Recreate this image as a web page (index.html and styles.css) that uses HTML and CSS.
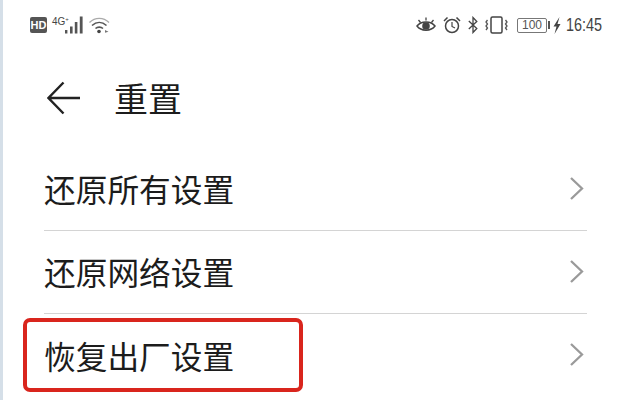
FILE: index.html
```html
<!DOCTYPE html>
<html lang="zh">
<head>
<meta charset="utf-8">
<title>重置</title>
<link rel="stylesheet" href="styles.css">
</head>
<body>
<div class="screen">
  <div class="status">
    <div class="status-left">
      <span class="hd">HD</span>
      <span class="net">4G<sup>+</sup></span>
      <svg class="signal" width="20" height="18" viewBox="0 0 20 18"><path d="M1 14h2.400v3.500H1zM6 10.500h2.600v7H6zM10.800 6h2.600v11.500h-2.600zM15.800 .5h2.800v17h-2.800z" fill="#555"/></svg>
      <svg class="wifi" width="21" height="18" viewBox="0 0 21 18" fill="none"><path d="M.5 6.500C6 1 14.500 1 20 6.500" stroke="#aaa" stroke-width="1.300"/><path d="M3 9.500C7.500 5.500 13 5.500 17.500 9.500" stroke="#555" stroke-width="1.600"/><path d="M6.500 12.500C8.500 10.700 12 10.700 14 12.500" stroke="#555" stroke-width="1.600"/><circle cx="10" cy="15.500" r="1.800" fill="#444"/><path d="M16 14l3.500 1.800-3.500 1z" fill="#777"/></svg>
    </div>
    <div class="status-right">
      <svg width="20" height="18" viewBox="0 0 20 18" fill="none"><path d="M1 10C5 4.500 15 4.500 19 10 15 15.500 5 15.500 1 10z" stroke="#444" stroke-width="1.500"/><circle cx="10" cy="10" r="3.800" fill="#444"/><path d="M2.500 4l2 2.500M17.500 4l-2 2.500M10 1.500v3" stroke="#444" stroke-width="1.300"/></svg>
      <svg width="18" height="18" viewBox="0 0 18 18" fill="none"><circle cx="9" cy="10" r="6.500" stroke="#444" stroke-width="1.500"/><path d="M9 6v4.500l3 1.500" stroke="#444" stroke-width="1.200"/><path d="M1 5L4.500 1.500M17 5L13.500 1.500" stroke="#444" stroke-width="1.500"/></svg>
      <svg width="10" height="18" viewBox="0 0 10 18" fill="none"><path d="M.8 5l8 7.500-3.800 4V1.500L8.800 5.500l-8 7.500" stroke="#444" stroke-width="1.300"/></svg>
      <svg width="23" height="18" viewBox="0 0 23 18" fill="none"><rect x="6" y="1" width="11" height="16" rx="1.500" stroke="#444" stroke-width="1.500"/><path d="M2.500 4L1 6l1.500 2L1 10l1.500 2L1 14M20.500 4L22 6l-1.500 2L22 10l-1.500 2L22 14" stroke="#555" stroke-width="1.300"/></svg>
      <span class="battery"><span class="battery-body">100</span><span class="battery-cap"></span></span>
      <svg class="bolt" width="8" height="17" viewBox="0 0 8 17"><path d="M6.500 0L.5 9.500h3L1.500 17l6-10h-3z" fill="#444"/></svg>
      <span class="time">16:45</span>
    </div>
  </div>
  <header class="title-bar">
    <svg class="back" width="34" height="34" viewBox="0 0 34 34" fill="none"><path d="M33 17H2.500M16.500 1.500L1.500 17l15 15.500" stroke="#222" stroke-width="2.400"/></svg>
    <h1 class="title">重置</h1>
  </header>
  <ul class="list">
    <li class="row"><span>还原所有设置</span><svg class="chev" width="15" height="25" viewBox="0 0 15 25" fill="none"><path d="M2 2l11 10.500L2 23" stroke="#9a9a9a" stroke-width="2.300"/></svg></li>
    <li class="row"><span>还原网络设置</span><svg class="chev" width="15" height="25" viewBox="0 0 15 25" fill="none"><path d="M2 2l11 10.500L2 23" stroke="#9a9a9a" stroke-width="2.300"/></svg></li>
    <li class="row"><span>恢复出厂设置</span><svg class="chev" width="15" height="25" viewBox="0 0 15 25" fill="none"><path d="M2 2l11 10.500L2 23" stroke="#9a9a9a" stroke-width="2.300"/></svg><div class="highlight"></div></li>
  </ul>
</div>
</body>
</html>
```
FILE: styles.css
```css
* { box-sizing: border-box; }
html, body { margin: 0; padding: 0; }
body {
  width: 629px;
  height: 400px;
  overflow: hidden;
  background: #fff;
  font-family: "Noto Sans CJK SC", "Liberation Sans", sans-serif;
}
.screen {
  height: 400px;
  border-left: 3px solid #d5dfe8;
}
.status {
  height: 50px;
  display: flex;
  justify-content: space-between;
  align-items: center;
  padding: 0 27px 0 27px;
  color: #444;
}
.status-left, .status-right { display: flex; align-items: center; }
.status-left { gap: 5px; }
.status-right { gap: 7px; }
.hd {
  width: 17px;
  height: 16px;
  background: #555;
  color: #fff;
  border-radius: 2px;
  font: bold 11px/16px "Liberation Sans", sans-serif;
  text-align: center;
}
.net {
  align-self: flex-start;
  width: 14px;
  margin-top: 1px;
  font: 10px/10px "Liberation Sans", sans-serif;
  white-space: nowrap;
}
.net sup { font-size: 6px; line-height: 0; }
.signal { margin-left: -7px; }
.battery { display: flex; align-items: center; margin-left: 2px; }
.battery-body {
  width: 30px;
  height: 15px;
  border: 1px solid #777;
  border-radius: 2px;
  font: 12px/13px "Liberation Sans", sans-serif;
  text-align: center;
  color: #555;
}
.battery-cap { width: 2px; height: 8px; margin-left: 1px; background: #555; }
.bolt { margin-left: -4px; }
.time {
  width: 36px;
  margin-left: -2px;
  font: 18px/18px "Liberation Sans", sans-serif;
  color: #444;
  white-space: nowrap;
  transform: scaleX(.8);
  transform-origin: left center;
}
.title-bar {
  height: 98px;
  display: flex;
  align-items: center;
  gap: 33px;
  padding: 0 0 2px 44px;
}
.back { flex: none; }
.title {
  margin: 0;
  font-size: 34px;
  font-weight: 400;
  line-height: 44px;
  color: #1c1c1c;
}
.list {
  list-style: none;
  margin: 0 42px 0 41px;
  padding: 0;
}
.row {
  position: relative;
  height: 83px;
  display: flex;
  justify-content: space-between;
  align-items: center;
  padding: 0 3px 2px 0;
  border-bottom: 1px solid #d4d4d4;
  font-size: 31.700px;
  color: #1c1c1c;
}
.row:last-child { border-bottom: 0; }
.highlight {
  position: absolute;
  left: -21px;
  top: 4px;
  width: 280px;
  height: 74px;
  border: 4px solid #d9251d;
  border-radius: 7px;
}
```
